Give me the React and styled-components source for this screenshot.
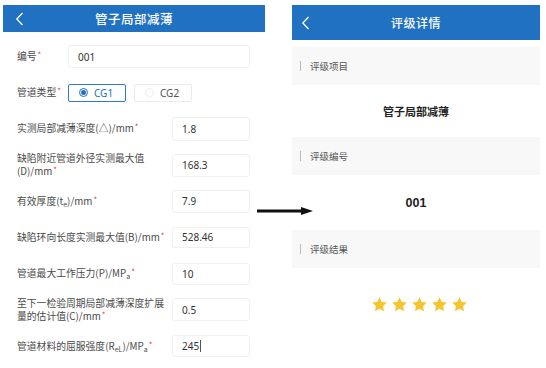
import React from "react";
import styled, { createGlobalStyle } from "styled-components";

const GlobalStyle = createGlobalStyle`
  html, body {
    margin: 0;
    padding: 0;
    background: #fff;
  }
  body {
    font-family: "Noto Sans CJK SC", "Noto Sans", sans-serif;
  }
`;

const Page = styled.div`
  position: relative;
  display: flex;
  align-items: flex-start;
  gap: 27px;
  padding: 5px 0 0 3px;
  width: 546px;
  height: 368px;
  box-sizing: border-box;
  overflow: hidden;
`;

const Panel = styled.div`
  width: ${p => p.w}px;
  display: flex;
  flex-direction: column;
`;

const Header = styled.div`
  position: relative;
  height: ${p => p.h}px;
  background: #2171c2;
  display: flex;
  align-items: center;
  justify-content: center;
  color: #fff;
  font-size: ${p => p.fs}px;
  font-weight: 500;
  letter-spacing: 0.5px;
`;

const Back = styled.svg`
  position: absolute;
  left: ${p => p.l}px;
  top: 50%;
  transform: translateY(-50%);
`;

const Form = styled.div`
  display: flex;
  flex-direction: column;
  gap: 13.2px;
  padding-top: 13px;
`;

const Row = styled.div`
  display: flex;
  align-items: center;
  height: 23px;
  padding-left: 14px;
`;

const Label = styled.div`
  width: ${p => p.w}px;
  flex-shrink: 0;
  font-size: 9.8px;
  line-height: 13px;
  color: #4a4a4a;
  box-sizing: border-box;

  sub {
    font-size: 7px;
    vertical-align: -2px;
    line-height: 0;
  }

  &::after {
    content: "*";
    color: #e53935;
    font-size: 8px;
    line-height: 0;
    margin-left: 1px;
    vertical-align: 2px;
  }
`;

const Input = styled.div`
  width: ${p => p.w}px;
  height: ${p => p.h || 23}px;
  border: 1px solid #efefef;
  border-radius: 3px;
  box-sizing: border-box;
  display: flex;
  align-items: center;
  padding-left: 9px;
  font-family: "Noto Sans", sans-serif;
  font-size: 10px;
  color: #333;
`;

const Caret = styled.span`
  display: inline-block;
  width: 1px;
  height: 12px;
  background: #555;
  margin-left: 1px;
`;

const RadioGroup = styled.div`
  display: flex;
  gap: 8px;
`;

const RadioBox = styled.div`
  width: 58px;
  height: 18px;
  box-sizing: border-box;
  border: 1px solid ${p => (p.on ? "#2b7bd0" : "#ececec")};
  border-radius: 2px;
  display: flex;
  align-items: center;
  padding-left: 10px;
  gap: 6px;
  font-family: "Noto Sans", sans-serif;
  font-size: 10px;
  color: ${p => (p.on ? "#2171c2" : "#555")};
`;

const Dot = styled.span`
  width: 9px;
  height: 9px;
  border-radius: 50%;
  box-sizing: border-box;
  border: 1px solid ${p => (p.on ? "#2171c2" : "#eee")};
  display: flex;
  align-items: center;
  justify-content: center;

  &::after {
    content: "";
    width: 5px;
    height: 5px;
    border-radius: 50%;
    background: ${p => (p.on ? "#2171c2" : "transparent")};
  }
`;

const Section = styled.div`
  height: 38px;
  margin-top: ${p => p.mt}px;
  background: #f8f8f8;
  display: flex;
  align-items: center;
  padding-left: 8px;
  gap: 9px;
  font-size: 9.5px;
  color: #555;
`;

const Bar = styled.span`
  width: 1px;
  height: 10px;
  background: #bbb;
`;

const Value = styled.div`
  height: ${p => p.h}px;
  display: flex;
  align-items: center;
  justify-content: center;
  font-family: ${p => (p.num ? '"Liberation Sans", sans-serif' : '"Noto Sans CJK SC", sans-serif')};
  font-size: ${p => p.fs}px;
  font-weight: 700;
  color: #222;
`;

const Stars = styled.div`
  display: flex;
  justify-content: center;
  gap: 3px;
  padding-top: 28px;
  padding-left: 7px;
`;

const Arrow = styled.svg`
  position: absolute;
  left: 257px;
  top: 205px;
`;

function Chevron({ left }) {
  return (
    <Back l={left} width="9" height="14" viewBox="0 0 9 14">
      <path d="M7.5 1 L1.8 7 L7.5 13" fill="none" stroke="#fff" strokeWidth="1.3" />
    </Back>
  );
}

function StarIcon() {
  return (
    <svg width="17" height="17" viewBox="0 0 24 24">
      <path
        d="M12 1.8l3.1 6.6 7.2.9-5.3 5 1.4 7.1L12 17.9l-6.4 3.5L7 14.3l-5.3-5 7.2-.9z"
        fill="#f6c52e"
      />
    </svg>
  );
}

const rows = [
  { label: <>实测局部减薄深度(△)/mm</>, value: "1.8", h: 24 },
  { label: <>缺陷附近管道外径实测最大值(D)/mm</>, value: "168.3" },
  { label: <>有效厚度(t<sub>e</sub>)/mm</>, value: "7.9" },
  { label: <>缺陷环向长度实测最大值(B)/mm</>, value: "528.46", h: 21 },
  { label: <>管道最大工作压力(P)/MP<sub>a</sub></>, value: "10", h: 22 },
  { label: <>至下一检验周期局部减薄深度扩展量的估计值(C)/mm</>, value: "0.5" },
  { label: <>管道材料的屈服强度(R<sub>eL</sub>)/MP<sub>a</sub></>, value: "245", caret: true, h: 22 }
];

export default function App() {
  return (
    <>
      <GlobalStyle />
      <Page>
        <Panel w={262}>
          <Header h={27} fs={12.5}>
            <Chevron left={12} />
            管子局部减薄
          </Header>
          <Form>
            <Row>
              <Label w={51}>编号</Label>
              <Input w={182}>001</Input>
            </Row>
            <Row>
              <Label w={51}>管道类型</Label>
              <RadioGroup>
                <RadioBox on>
                  <Dot on />
                  CG1
                </RadioBox>
                <RadioBox>
                  <Dot />
                  CG2
                </RadioBox>
              </RadioGroup>
            </Row>
            {rows.map((r, i) => (
              <Row key={i}>
                <Label w={155}>{r.label}</Label>
                <Input w={78} h={r.h}>
                  {r.value}
                  {r.caret && <Caret />}
                </Input>
              </Row>
            ))}
          </Form>
        </Panel>

        <Panel w={248}>
          <Header h={35} fs={12}>
            <Chevron left={9} />
            评级详情
          </Header>
          <Section mt={7}>
            <Bar />
            评级项目
          </Section>
          <Value h={52} fs={11}>
            管子局部减薄
          </Value>
          <Section mt={0}>
            <Bar />
            评级编号
          </Section>
          <Value h={55} fs={12.5} num>
            001
          </Value>
          <Section mt={0}>
            <Bar />
            评级结果
          </Section>
          <Stars>
            <StarIcon />
            <StarIcon />
            <StarIcon />
            <StarIcon />
            <StarIcon />
          </Stars>
        </Panel>

        <Arrow width="58" height="12" viewBox="0 0 58 12">
          <line x1="0" y1="6" x2="46" y2="6" stroke="#111" strokeWidth="3" />
          <path d="M44 2 L56 6 L44 10 Z" fill="#111" />
        </Arrow>
      </Page>
    </>
  );
}
